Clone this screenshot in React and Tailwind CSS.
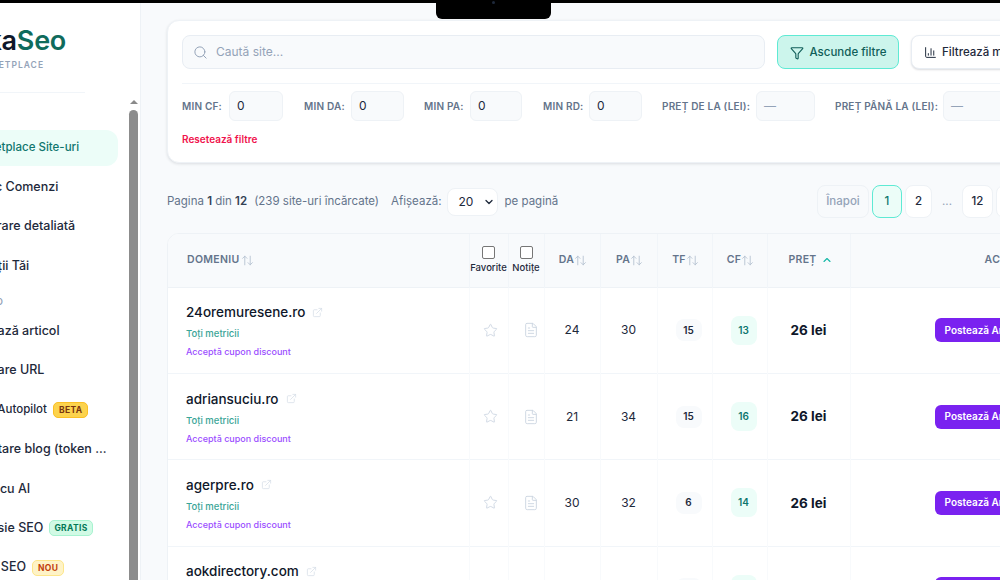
import React from "react";
import { Search, Filter, ChartColumn, ArrowUpDown, ChevronUp, Star, FileText, ExternalLink, ChevronDown } from "lucide-react";

const NAV_TOP = [
  { label: "Marketplace Site-uri", active: true, text: "ml-[1px] text-[11.5px]" },
  { label: "Istoric Comenzi", text: "-ml-[1px] text-[12.5px]" },
  { label: "Măsurare detaliată", text: "-ml-[2px] text-[12.5px]" },
  { label: "Proiecții Tăi", text: "-ml-[6px] text-[12.5px]" },
];

const NAV_BOTTOM = [
  { label: "Creează articol", text: "ml-[3px] text-[12.5px]" },
  { label: "Solicitare URL", text: "-ml-[5px] text-[12.5px]" },
  { label: "AI Autopilot", text: "ml-[17px] text-[11.5px]", badge: "BETA", badgeCls: "px-[5px] bg-[#fcd34d] text-[#78350f] border-[#fbbf24]" },
  { label: "Conectare blog (token ...", text: "-ml-[7px] text-[12.5px]" },
  { label: "Articole cu AI", text: "-ml-[16px] text-[12.5px]" },
  { label: "Analiză Clasie SEO", text: "-ml-[35px] text-[12.5px]", badge: "GRATIS", badgeCls: "px-[4px] bg-[#d1fae5] text-[#047857] border-[#a7f3d0]" },
  { label: "Audit SEO", text: "text-[12.5px]", badge: "NOU", badgeCls: "px-[5px] bg-[#fef3c7] text-[#c2410c] border-[#fde68a]" },
];

const FILTERS = [
  { label: "MIN CF:", value: "0", x: "ml-0", lw: "w-[47px]", w: "w-[54px]" },
  { label: "MIN DA:", value: "0", x: "ml-[21px]", lw: "w-[47px]", w: "w-[53px]" },
  { label: "MIN PA:", value: "0", x: "ml-[20px]", lw: "w-[46px]", w: "w-[52px]" },
  { label: "MIN RD:", value: "0", x: "ml-[21px]", lw: "w-[46px]", w: "w-[53px]" },
  { label: "PREȚ DE LA (LEI):", value: "—", x: "ml-[20px]", lw: "w-[94px]", w: "w-[59px]", muted: true },
  { label: "PREȚ PÂNĂ LA (LEI):", value: "—", x: "ml-[20px]", lw: "w-[108px]", w: "w-[70px]", muted: true },
];

const ROWS = [
  { domain: "24oremuresene.ro", da: 24, pa: 30, tf: 15, cf: 13 },
  { domain: "adriansuciu.ro", da: 21, pa: 34, tf: 15, cf: 16 },
  { domain: "agerpre.ro", da: 30, pa: 32, tf: 6, cf: 14 },
  { domain: "aokdirectory.com", da: 28, pa: 31, tf: 12, cf: 15 },
];

function NavItem({ item }) {
  return (
    <div className={`flex h-[36px] items-center rounded-xl mb-[3.4px] ${item.active ? "bg-[#ecfdf8] text-[#0f766e]" : "text-[#1e293b]"}`}>
      <span className={`whitespace-nowrap font-medium ${item.text}`}>{item.label}</span>
      {item.badge && (
        <span className={`ml-[6px] rounded-[5px] border py-[1px] text-[8.5px] font-bold tracking-[0.04em] leading-[12px] ${item.badgeCls}`}>
          {item.badge}
        </span>
      )}
    </div>
  );
}

function Sidebar() {
  return (
    <aside className="relative h-full w-[141px] shrink-0 overflow-hidden border-r border-[#eef2f6] bg-white">
      <div className="pt-[21px] -ml-[34px] w-[152px]">
        <div className="flex w-[100px] justify-end whitespace-nowrap text-[27px] leading-[34px] font-semibold tracking-[-0.01em] text-[#0f172a]">
          Linka<span className="text-[#0f6b5c]">Seo</span>
        </div>
        <div className="mt-[1px] pl-[3px] text-[8.5px] font-semibold tracking-[0.12em] text-[#94a3b8]">MARKETPLACE</div>
        <div className="mt-[20px] h-px w-[119px] bg-[#f1f5f9]" />
        <div className="mt-[15px] h-[13px] text-[9px] leading-[13px] font-semibold tracking-[0.1em] text-[#94a3b8]">CONT</div>
        <div className="mt-[9px]">
          {NAV_TOP.map((item) => (
            <NavItem key={item.label} item={item} />
          ))}
        </div>
        <div className="mt-[11px] ml-[17px] h-[13px] text-[9px] leading-[13px] font-semibold tracking-[0.1em] text-[#94a3b8]">SEO</div>
        <div className="mt-[5.4px]">
          {NAV_BOTTOM.map((item) => (
            <NavItem key={item.label} item={item} />
          ))}
        </div>
      </div>
      {/* scrollbar */}
      <div className="absolute right-[2px] top-[94px] bottom-0 w-[9px] bg-white">
        <div className="mx-auto mt-[3px] h-0 w-0 border-x-[4px] border-b-[4px] border-x-transparent border-b-[#8a8a8a]" />
        <div className="mt-[6px] h-[480px] rounded-t-full bg-[#8c8c8c]" />
      </div>
    </aside>
  );
}

function FilterField({ f }) {
  return (
    <div className={`flex shrink-0 items-center ${f.x}`}>
      <span className={`shrink-0 whitespace-nowrap text-[10px] font-semibold tracking-[0.02em] text-[#64748b] ${f.lw}`}>{f.label}</span>
      <div className={`flex h-[30px] items-center rounded-md border border-[#eef2f6] bg-[#f8fafc] pl-[7px] text-[12px] ${f.w} ${f.muted ? "text-[#94a3b8]" : "text-[#1e293b]"}`}>
        {f.value}
      </div>
    </div>
  );
}

function FilterCard() {
  return (
    <section className="w-[860px] rounded-xl border border-[#eef2f6] bg-white px-[14px] pt-[14px] pb-[16px] shadow-[0_1px_3px_rgba(15,23,42,0.12)]">
      <div className="flex items-center">
        <div className="flex h-[34px] w-[583px] shrink-0 items-center rounded-lg border border-[#e8edf3] bg-[#f8fafc] pl-[10px]">
          <Search size={15} strokeWidth={1.6} className="text-[#94a3b8]" />
          <span className="ml-[8px] text-[12px] text-[#94a3b8]">Caută site...</span>
        </div>
        <button className="ml-[12px] flex h-[34px] w-[122px] shrink-0 items-center justify-center gap-[6px] rounded-lg border border-[#5eead4] bg-[#ccf5ec] pt-px text-[11.5px] font-medium text-[#115e59]">
          <Filter size={14} strokeWidth={1.9} />
          Ascunde filtre
        </button>
        <button className="ml-[12px] flex h-[34px] w-[130px] shrink-0 items-center gap-[5px] rounded-lg border border-[#e8edf3] bg-white pt-px pl-[12px] text-[11.5px] font-medium whitespace-nowrap text-[#1e293b] shadow-[0_1px_2px_rgba(15,23,42,0.15)]">
          <ChartColumn size={13} strokeWidth={1.8} />
          Filtrează metrici
        </button>
      </div>
      <div className="mt-[14px] border-t border-[#f1f5f9] pt-[7px]">
        <div className="flex items-center">
          {FILTERS.map((f) => (
            <FilterField key={f.label} f={f} />
          ))}
        </div>
        <div className="mt-[11px] text-[10px] leading-[14px] font-semibold text-[#f0134d]">Resetează filtre</div>
      </div>
    </section>
  );
}

function PageBtn({ children, cls = "" }) {
  return (
    <button className={`flex h-[33px] items-center justify-center rounded-lg border text-[11.5px] font-medium ${cls}`}>
      {children}
    </button>
  );
}

function Toolbar() {
  return (
    <div className="mt-[22px] mb-[15px] flex h-[33px] w-[860px] items-center whitespace-nowrap text-[11.5px] text-[#64748b]">
      <span>
        Pagina <b className="font-semibold text-[#334155]">1</b> din <b className="font-semibold text-[#334155]">12</b>
      </span>
      <span className="ml-[7px]">(239 site-uri încărcate)</span>
      <span className="ml-[12px]">Afișează:</span>
      <div className="ml-[5px] flex h-[28px] w-[51px] items-center justify-between rounded-lg border border-[#eef2f6] bg-white pl-[11px] pr-[2px] text-[12px] text-[#1e293b]">
        20
        <ChevronDown size={12} strokeWidth={2.6} className="text-[#1e293b]" />
      </div>
      <span className="ml-[7px]">pe pagină</span>
      <div className="ml-auto flex w-[210px] shrink-0 items-center gap-[3px]">
        <PageBtn cls="w-[52px] shrink-0 border-[#eef2f6] text-[#94a3b8]">Înapoi</PageBtn>
        <PageBtn cls="w-[30px] shrink-0 border-[#5eead4] bg-[#ecfdf8] text-[#0f766e]">1</PageBtn>
        <PageBtn cls="w-[27px] shrink-0 border-[#eef2f6] bg-white text-[#1e293b]">2</PageBtn>
        <span className="w-[24px] shrink-0 text-center text-[#94a3b8]">...</span>
        <PageBtn cls="w-[31px] shrink-0 border-[#eef2f6] bg-white text-[#1e293b]">12</PageBtn>
        <PageBtn cls="w-[48px] shrink-0 border-[#eef2f6] bg-white text-[#1e293b]">Înainte</PageBtn>
      </div>
    </div>
  );
}

function SortHead({ label }) {
  return (
    <th className="border-r border-[#f1f5f9] p-0 pl-[2px] font-semibold">
      <span className="flex items-center justify-center text-[10.5px] tracking-[0.03em] text-[#64748b]">
        {label}
        <ArrowUpDown size={13} strokeWidth={1.6} className="text-[#b4c0cf]" />
      </span>
    </th>
  );
}

function CheckHead({ label }) {
  return (
    <th className="border-r border-[#f1f5f9] p-0 text-center">
      <div className="mx-auto h-[13px] w-[13px] rounded-[2px] border border-[#767676] bg-white" />
      <div className="mt-[3px] text-[9.5px] leading-[12px] font-medium text-[#1e293b]">{label}</div>
    </th>
  );
}

function DataTable() {
  return (
    <div className="w-[920px] overflow-hidden rounded-t-xl border border-[#eef2f6] bg-white">
      <table className="w-full table-fixed border-collapse">
        <colgroup>
          <col className="w-[301px]" />
          <col className="w-[39px]" />
          <col className="w-[36px]" />
          <col className="w-[56px]" />
          <col className="w-[57px]" />
          <col className="w-[55px]" />
          <col className="w-[55px]" />
          <col className="w-[83px]" />
          <col />
        </colgroup>
        <thead>
          <tr className="h-[53px] border-b border-[#eef2f6] bg-[#f8fafc]">
            <th className="border-r border-[#f1f5f9] p-0 pl-[19px] font-semibold">
              <span className="flex items-center gap-[1px] text-[10.5px] tracking-[0.03em] text-[#64748b]">
                DOMENIU
                <ArrowUpDown size={13} strokeWidth={1.6} className="text-[#b4c0cf]" />
              </span>
            </th>
            <CheckHead label="Favorite" />
            <CheckHead label="Notițe" />
            <SortHead label="DA" />
            <SortHead label="PA" />
            <SortHead label="TF" />
            <SortHead label="CF" />
            <th className="border-r border-[#f1f5f9] p-0 pl-[4px] font-semibold">
              <span className="flex items-center justify-center gap-[4px] text-[10.5px] tracking-[0.03em] text-[#64748b]">
                PREȚ
                <ChevronUp size={12} strokeWidth={2.2} className="text-[#14b8a6]" />
              </span>
            </th>
            <th className="p-0 pl-[134px] text-left text-[10.5px] leading-none font-semibold tracking-[0.04em] text-[#64748b]">ACȚIUNI</th>
          </tr>
        </thead>
        <tbody>
          {ROWS.map((r) => (
            <tr key={r.domain} className="h-[86.4px] border-b border-[#f1f5f9]">
              <td className="border-r border-[#f8fafc] p-0 pl-[18px] pt-[2px]">
                <div className="flex items-center">
                  <span className="text-[13.5px] leading-[18px] font-medium text-[#0f172a]">{r.domain}</span>
                  <ExternalLink size={11} strokeWidth={1.6} className="ml-[7px] text-[#d5dde7]" />
                </div>
                <div className="mt-[6px] text-[9.5px] leading-[14px] font-medium text-[#3aa597]">Toți metricii</div>
                <div className="mt-[4px] text-[9px] leading-[14px] font-medium text-[#9b4dff]">Acceptă cupon discount</div>
              </td>
              <td className="border-r border-[#f8fafc] p-0 pl-[4px] text-center">
                <Star size={15} strokeWidth={1.4} className="mx-auto text-[#cbd5e1]" />
              </td>
              <td className="border-r border-[#f8fafc] p-0 pl-[10px] text-center">
                <FileText size={16} strokeWidth={1.4} className="mx-auto text-[#cbd5e1]" />
              </td>
              <td className="border-r border-[#f8fafc] p-0 text-center text-[12px] text-[#1e293b]">{r.da}</td>
              <td className="border-r border-[#f8fafc] p-0 text-center text-[12px] text-[#1e293b]">{r.pa}</td>
              <td className="border-r border-[#f8fafc] p-0 pl-[8px]">
                <span className="mx-auto flex h-[22px] w-[26px] items-center justify-center rounded-lg bg-[#f8fafc] text-[10px] font-semibold text-[#1e293b]">{r.tf}</span>
              </td>
              <td className="border-r border-[#f8fafc] p-0 pl-[8px]">
                <span className="mx-auto flex h-[29px] w-[26px] items-center justify-center rounded-lg bg-[#ecfdf8] text-[10px] font-semibold text-[#0f766e]">{r.cf}</span>
              </td>
              <td className="border-r border-[#f8fafc] p-0 text-center text-[13.5px] font-bold text-[#0f172a]">26 lei</td>
              <td className="p-0 pl-[84px]">
                <button className="flex h-[24px] items-center justify-center rounded-md bg-[#7a22f0] px-[10px] text-[10px] font-semibold whitespace-nowrap text-white">
                  Postează Articol
                </button>
              </td>
            </tr>
          ))}
        </tbody>
      </table>
    </div>
  );
}

export default function App() {
  return (
    <div className="relative flex h-[580px] w-[1000px] flex-col overflow-hidden bg-[#f8fafc] font-['Inter',sans-serif]">
      <div className="h-[3px] shrink-0 bg-black" />
      {/* notch */}
      <div className="absolute left-[436px] top-0 flex h-[19px] w-[115px] justify-center rounded-b-md bg-black">
        <div className="mt-[1px] h-[3px] w-[3px] rounded-full bg-[#1e293b]" />
      </div>
      <div className="flex min-h-0 flex-1">
        <Sidebar />
        <main className="min-w-0 flex-1 overflow-hidden pl-[26px] pt-[17px]">
          <FilterCard />
          <Toolbar />
          <DataTable />
        </main>
      </div>
    </div>
  );
}
